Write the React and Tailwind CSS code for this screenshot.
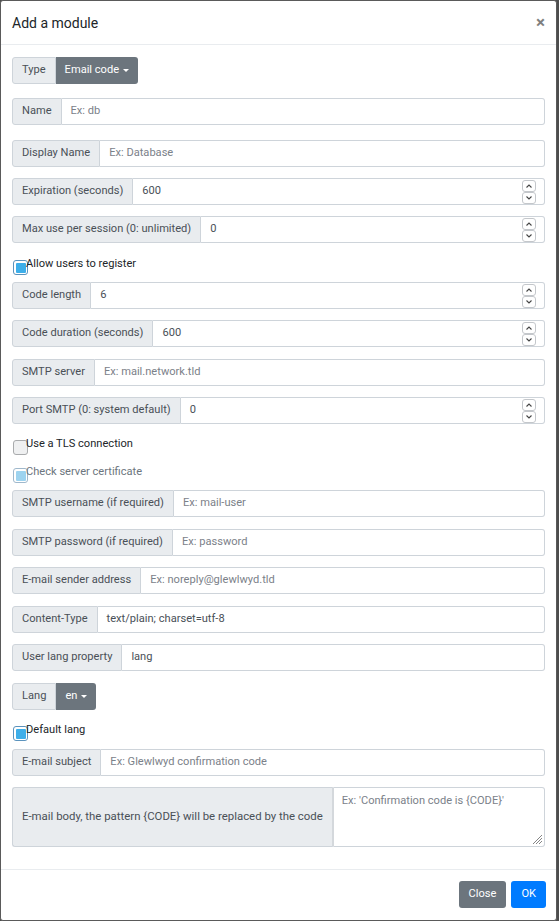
import React from "react";

const font = { fontFamily: "Roboto, 'Liberation Sans', Arial, sans-serif" };

function Spinner() {
  return (
    <div className="flex flex-col">
      <div className="w-[14px] h-[12px] border border-[#c4c7cb] rounded-[3px] bg-white flex items-center justify-center">
        <svg width="8" height="6" viewBox="0 0 8 6"><path d="M1.5 4.5 L4 2 L6.5 4.5" fill="none" stroke="#444" strokeWidth="1.1" /></svg>
      </div>
      <div className="w-[14px] h-[12px] border border-[#c4c7cb] rounded-[3px] bg-white flex items-center justify-center">
        <svg width="8" height="6" viewBox="0 0 8 6"><path d="M1.5 1.5 L4 4 L6.5 1.5" fill="none" stroke="#444" strokeWidth="1.1" /></svg>
      </div>
    </div>
  );
}

function Row({ label, value, placeholder, spinner, mt }) {
  return (
    <div className={`flex h-[27px] ${mt}`}>
      <div className="flex items-center bg-[#e9ecef] border border-[#ced4da] rounded-l-[3px] px-[9px] text-[#495057] whitespace-nowrap">
        {label}
      </div>
      <div className="flex-1 flex items-center justify-between border border-l-0 border-[#ced4da] rounded-r-[3px] pl-[9px] pr-[8px] bg-white">
        {value !== undefined ? (
          <span className="text-[#495057]">{value}</span>
        ) : (
          <span className="text-[#7b8189]">{placeholder}</span>
        )}
        {spinner && <Spinner />}
      </div>
    </div>
  );
}

function Check({ label, state, mt }) {
  let box;
  if (state === "on") {
    box = (
      <div className="w-[15px] h-[15px] rounded-[3px] border border-[#5b93bd] bg-white p-[1.5px]">
        <div className="w-full h-full rounded-[1px] bg-[#3daee9]" />
      </div>
    );
  } else if (state === "disabled") {
    box = (
      <div className="w-[15px] h-[15px] rounded-[3px] border border-[#9fb8cc] bg-white p-[1.5px]">
        <div className="w-full h-full rounded-[1px] bg-[#9dd3ef]" />
      </div>
    );
  } else {
    box = <div className="w-[15px] h-[15px] rounded-[3px] border border-[#a9abad] bg-[#eff0f1]" />;
  }
  return (
    <div className={`flex items-start h-[16px] ${mt}`}>
      <div className="ml-[1px] mt-[3px]">{box}</div>
      <span className={`ml-[-2px] leading-[14px] ${state === "disabled" ? "text-[#6c757d]" : "text-[#212529]"}`}>{label}</span>
    </div>
  );
}

export default function App() {
  return (
    <div className="w-[559px] h-[921px] bg-[#4d4d4d] overflow-hidden text-[11.1px]" style={font}>
      <div className="w-[557px] h-[921px] bg-white border border-[#5a5a5a] rounded-[3px] flex flex-col">
        <div className="h-[44px] flex items-center justify-between px-[11px] border-b border-[#e9ecef] shrink-0">
          <span className="text-[14px] text-[#212529] mt-[2px]">Add a module</span>
          <span className="text-[17px] font-bold text-[#000] opacity-50 leading-none">×</span>
        </div>
        <div className="px-[11px] flex flex-col">
          <div className="flex h-[27px] mt-[12px]">
            <div className="flex items-center bg-[#e9ecef] border border-[#ced4da] rounded-l-[3px] px-[9px] text-[#495057]">Type</div>
            <div className="flex items-center bg-[#6c757d] rounded-r-[3px] px-[9px] text-white">
              Email code
              <span className="inline-block w-0 h-0 border-x-[3px] border-x-transparent border-t-[3.5px] border-t-white ml-[4px]" />
            </div>
          </div>
          <Row label="Name" placeholder="Ex: db" mt="mt-[14px]" />
          <Row label="Display Name" placeholder="Ex: Database" mt="mt-[15px]" />
          <Row label="Expiration (seconds)" value="600" spinner mt="mt-[11px]" />
          <Row label="Max use per session (0: unlimited)" value="0" spinner mt="mt-[11px]" />
          <Check label="Allow users to register" state="on" mt="mt-[14px]" />
          <Row label="Code length" value="6" spinner mt="mt-[9px]" />
          <Row label="Code duration (seconds)" value="600" spinner mt="mt-[11px]" />
          <Row label="SMTP server" placeholder="Ex: mail.network.tld" mt="mt-[12px]" />
          <Row label="Port SMTP (0: system default)" value="0" spinner mt="mt-[11px]" />
          <Check label="Use a TLS connection" state="off" mt="mt-[13px]" />
          <Check label="Check server certificate" state="disabled" mt="mt-[12px]" />
          <Row label="SMTP username (if required)" placeholder="Ex: mail-user" mt="mt-[9px]" />
          <Row label="SMTP password (if required)" placeholder="Ex: password" mt="mt-[12px]" />
          <Row label="E-mail sender address" placeholder="Ex: noreply@glewlwyd.tld" mt="mt-[11px]" />
          <Row label="Content-Type" value="text/plain; charset=utf-8" mt="mt-[12px]" />
          <Row label="User lang property" value="lang" mt="mt-[11px]" />
          <div className="flex h-[27px] mt-[12px]">
            <div className="flex items-center bg-[#e9ecef] border border-[#ced4da] rounded-l-[3px] px-[9px] text-[#495057]">Lang</div>
            <div className="flex items-center bg-[#6c757d] rounded-r-[3px] px-[9px] text-white">
              en
              <span className="inline-block w-0 h-0 border-x-[3px] border-x-transparent border-t-[3.5px] border-t-white ml-[4px]" />
            </div>
          </div>
          <Check label="Default lang" state="on" mt="mt-[13px]" />
          <Row label="E-mail subject" placeholder="Ex: Glewlwyd confirmation code" mt="mt-[10px]" />
          <div className="flex h-[60px] mt-[11px]">
            <div className="flex items-center bg-[#e9ecef] border border-[#ced4da] border-r-[2px] border-r-[#d4d8dc] rounded-l-[3px] px-[9px] text-[11.4px] text-[#495057] whitespace-nowrap">
              E-mail body, the pattern {"{CODE}"} will be replaced by the code
            </div>
            <div className="flex-1 relative border border-l-0 border-[#ced4da] rounded-r-[3px] pl-[8px] pt-[5px] bg-white">
              <span className="text-[#7b8189]">Ex: 'Confirmation code is {"{CODE}"}'</span>
              <svg className="absolute right-[1px] bottom-[1px]" width="12" height="12" viewBox="0 0 12 12">
                <path d="M11 2 L2 11 M11 5 L5 11 M11 8 L8 11" stroke="#777" strokeWidth="0.9" />
              </svg>
            </div>
          </div>
        </div>
        <div className="flex-1" />
        <div className="h-[51px] border-t border-[#e9ecef] flex items-start justify-end pt-[11px] pr-[10px] gap-[5px] shrink-0">
          <div className="h-[27px] px-[10px] flex items-center bg-[#6c757d] text-white rounded-[3px]">Close</div>
          <div className="h-[27px] px-[10px] flex items-center bg-[#007bff] text-white rounded-[3px]">OK</div>
        </div>
      </div>
    </div>
  );
}
